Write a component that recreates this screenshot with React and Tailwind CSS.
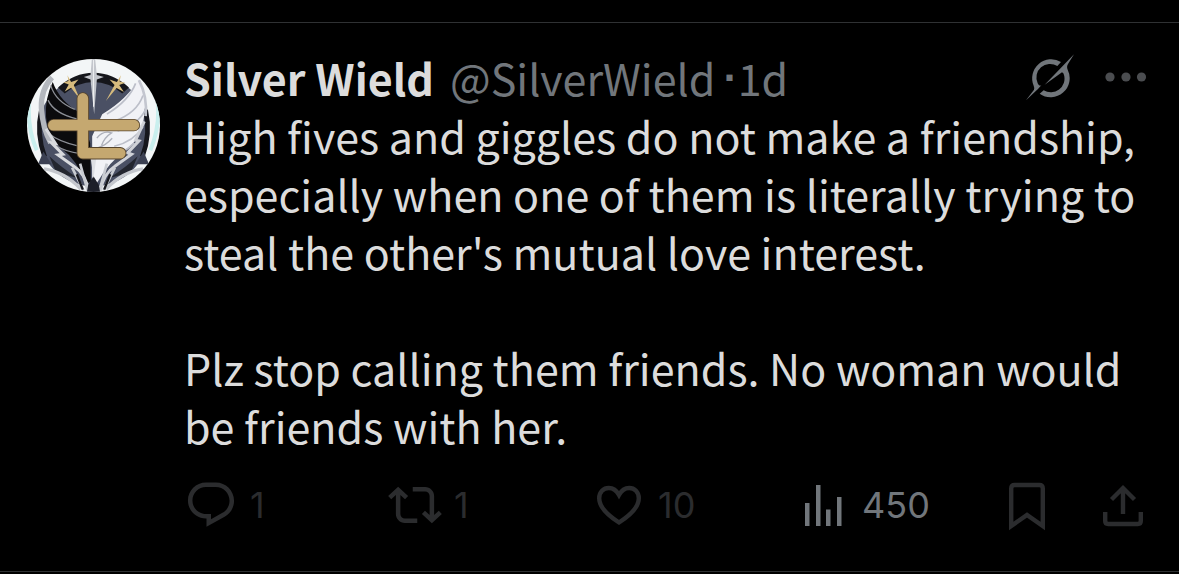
const Avatar = () => {
   return (
      <svg viewBox="37 27 398 398" className="size-[133px] shrink-0" role="img" aria-label="Silver Wield">
         <defs>
            <clipPath id="avatar-round">
               <circle cx="236" cy="226" r="199" />
            </clipPath>
         </defs>
         <g clipPath="url(#avatar-round)">
            <rect x="37" y="27" width="398" height="398" fill="#f3f6f7" />
            <path d="M44 150q-8 80 22 150M428 150q8 80-22 150" stroke="#c9efee" strokeWidth="12" fill="none" />
            {/* emblem disc */}
            <circle cx="236" cy="242" r="166" fill="#4a5064" />
            <path d="M130 112q48-44 106-44t106 44l-20 18q-40-34-86-34t-86 34z" fill="#15161b" />
            <path d="M80 180q-16 70 10 140M392 180q16 70-10 140" stroke="#16171d" strokeWidth="14" fill="none" />
            <path d="M70 342l16-38 24 38zM402 342l-16-38-24 38z" fill="#3b4052" />
            <path d="M104 318q36 34 86 66l-66-18zM368 318q-36 34-86 66l66-18z" fill="#23262f" />
            {/* dark wing */}
            <path d="M114 96q-24 50-20 104 4 60 46 94 46 34 74 106l14-6-2-116-30-90q-60-32-82-92z" fill="#0b0b0d" />
            <path d="M112 82q-34 36-32 92 4 62 28 104" stroke="#b4b8be" strokeWidth="16" fill="none" />
            <path d="M108 106q14 48 72 72M100 150q18 40 86 56M102 250q30 24 84 36M114 282q36 22 84 28" stroke="#8b8e95" strokeWidth="4" fill="none" />
            <path d="M94 236l28 44-12-2 34 34-14 2 50 36q32 20 42 74" stroke="#d8dade" strokeWidth="9" fill="none" />
            <path d="M88 356q60 8 110 60M384 356q-60 8-110 60" stroke="#c4c7cd" strokeWidth="10" fill="none" />
            {/* white wing */}
            <path d="M370 88q24 50 18 104-6 70-54 106-52 38-88 100l-14-10v-130l30-66q76-46 108-104z" fill="#f1f2f6" />
            <path d="M362 100q-20 52-86 92M384 136q-18 52-84 76M392 178q-22 46-84 64M384 230q-28 44-86 58M358 278q-34 34-72 40" stroke="#bcbfc9" strokeWidth="5" fill="none" />
            <path d="M372 90q26 50 20 108" stroke="#c3c6cf" strokeWidth="8" fill="none" />
            <path d="M388 214l-26 56 10 2-34 36 12 4-50 36q-34 22-44 74" stroke="#cfd1d7" strokeWidth="9" fill="none" />
            <path d="M246 264q18-24 44-16-22 14-30 38M250 292q22-6 42-28" stroke="#aeb1bb" strokeWidth="4" fill="none" />
            {/* tail feathers */}
            <path d="M172 352l34 68M196 340l22 80M300 352l-34 68M276 340l-22 80" stroke="#c9ccd2" strokeWidth="8" />
            <path d="M186 372l18 46M286 372l-18 46" stroke="#16171d" strokeWidth="7" />
            <path d="M220 404l16-26 16 26 4 22h-40z" fill="#1d1f29" />
            <path d="M228 326l8 58 8-58z" fill="#dddfe4" />
            {/* swords */}
            <path d="M231 27h10l5 48 21 6-21 7-8 104-11-104-20-7 20-6z" fill="#c3c6cc" />
            <path d="M236 30v140" stroke="#eceef0" strokeWidth="3" />
            <path d="M158 76l11 20 22-8-14 17 18 42-26-34-19 11 12-21-16-6 15-4zM318 76l-12 20-22-8 15 17-26 48 32-39 22 12-14-21 18-7-17-4z" fill="#d6bb7d" />
            {/* gold monogram */}
            <path d="M204 145v164h112M116 225h241" stroke="#57452c" strokeWidth="37" strokeLinecap="round" strokeLinejoin="round" fill="none" />
            <path d="M204 145v164h112M116 225h241" stroke="#c5a870" strokeWidth="32" strokeLinecap="round" strokeLinejoin="round" fill="none" />
         </g>
      </svg>
   )
}

const GrokIcon = () => (
   <svg viewBox="69 25 147 147" className="size-[49px]" fill="currentColor" aria-hidden="true">
      <path d="M72 167l24-32q2-5-1-12a57 57 0 0 1 82-71l-11 12a41 41 0 0 0-59 52q2 5 7 7l4-1-10 11z" />
      <path d="M216 29l-18 29q-5 8-1 17a57 57 0 0 1-84 72l12-10a41 41 0 0 0 61-46q-1-6-6-8l-52 37z" />
   </svg>
)

const MoreIcon = () => (
   <svg viewBox="0 0 48 48" className="size-12" fill="currentColor" aria-hidden="true">
      <circle cx="8" cy="24" r="4.6" />
      <circle cx="24" cy="24" r="4.6" />
      <circle cx="39.5" cy="24" r="4.6" />
   </svg>
)

const ReplyIcon = () => (
   <svg viewBox="0 0 24 24" className="size-[54px]" fill="currentColor" aria-hidden="true">
      <path d="M1.751 10c0-4.42 3.584-8 8.005-8h4.366c4.49 0 8.129 3.64 8.129 8.13 0 2.96-1.607 5.68-4.196 7.11l-8.054 4.46v-3.69h-.067c-4.49.1-8.183-3.51-8.183-8.01zm8.005-6c-3.317 0-6.005 2.69-6.005 6 0 3.37 2.77 6.08 6.138 6.01l.351-.01h1.761v2.3l5.087-2.81c1.951-1.08 3.163-3.13 3.163-5.36 0-3.39-2.744-6.13-6.129-6.13H9.756z" />
   </svg>
)

const RepostIcon = () => (
   <svg viewBox="0 0 24 24" className="size-[54px]" fill="currentColor" aria-hidden="true">
      <path d="M4.5 3.88l4.432 4.14-1.364 1.46L5.5 7.55V16c0 1.1.896 2 2 2H13v2H7.5c-2.209 0-4-1.79-4-4V7.55L1.432 9.48.068 8.02 4.5 3.88zM16.5 6H11V4h5.5c2.209 0 4 1.79 4 4v8.45l2.068-1.93 1.364 1.46-4.432 4.14-4.432-4.14 1.364-1.46 2.068 1.93V8c0-1.1-.896-2-2-2z" />
   </svg>
)

const LikeIcon = () => (
   <svg viewBox="0 0 54 54" className="size-[54px]" fill="none" stroke="currentColor" strokeWidth="4.4" aria-hidden="true">
      <path d="M27 44.5C14.5 36.5 7.2 28.5 7.2 20.2c0-6.2 4.3-10.2 9.6-10.2 4.4 0 7.8 2.6 10.2 7 2.4-4.4 5.8-7 10.2-7 5.3 0 9.6 4 9.6 10.2 0 8.3-7.3 16.3-19.8 24.3z" />
   </svg>
)

const ViewsIcon = () => (
   <svg viewBox="0 0 54 54" className="size-[54px]" fill="currentColor" aria-hidden="true">
      <path d="M9 25h4.5v23H9zM20 7h4.5v41H20zM30 31.5h4.5V48H30zM41 19h4.5v29H41z" />
   </svg>
)

const BookmarkIcon = () => (
   <svg viewBox="0 0 54 54" className="size-[54px]" fill="none" stroke="currentColor" strokeWidth="4.4" aria-hidden="true">
      <path d="M11.2 48V10.5q0-3.5 3.5-3.5h24.6q3.5 0 3.5 3.5V48L27 37z" />
   </svg>
)

const ShareIcon = () => (
   <svg viewBox="0 0 54 54" className="size-[54px]" fill="none" stroke="currentColor" strokeWidth="4.4" aria-hidden="true">
      <path d="M27 36V10M15.5 21.5L27 10l11.5 11.5M9.2 34v9q0 3 3 3h29.6q3 0 3-3v-9" />
   </svg>
)

const Action = ({ icon, label, count, color }) => {
   return (
      <div className="flex-1">
         <button className={`flex items-center gap-3 ${color}`} aria-label={label}>
            {icon}
            <span className="font-['Inter',sans-serif] text-4xl">{count}</span>
         </button>
      </div>
   )
}

const App = () => {
   return (
      <div className="min-h-screen bg-black pt-[22px] font-['Noto_Sans_CJK_SC',sans-serif] text-[43px] leading-[58px] text-[#dcdcdc]">
         <article className="flex gap-6 border-y border-[#2f3133] pt-[25px] pb-[39px] pl-[27px] pr-[29px]">
            <a href="#profile" className="mt-[11px] shrink-0 self-start">
               <Avatar />
            </a>
            <div className="min-w-0 flex-1">
               <header className="flex items-center">
                  <a href="#profile" className="flex gap-4">
                     <span className="font-bold">Silver Wield</span>
                     <span className="text-[#71767b]">@SilverWield</span>
                  </a>
                  <span className="ml-2 font-['Liberation_Sans',sans-serif] font-bold text-[#71767b]">·</span>
                  <a href="#post" className="text-[#71767b]">1d</a>
                  <div className="ml-auto flex items-center gap-7">
                     <button aria-label="Explain this post" className="text-[#71767b]"><GrokIcon /></button>
                     <button aria-label="More" className="text-[#4b4d50]"><MoreIcon /></button>
                  </div>
               </header>
               <p>
                  High fives and giggles do not make a friendship, especially when one of them is literally trying to steal the other's mutual love interest.
               </p>
               <p className="mt-[58px]">
                  Plz stop calling them friends. No woman would be friends with her.
               </p>
               <footer className="mt-6 flex items-center text-[#2b2c2e]">
                  <Action icon={<ReplyIcon />} label="Reply" count="1" color="text-[#2b2c2e]" />
                  <Action icon={<RepostIcon />} label="Repost" count="1" color="text-[#2b2c2e]" />
                  <Action icon={<LikeIcon />} label="Like" count="10" color="text-[#2b2c2e]" />
                  <Action icon={<ViewsIcon />} label="Views" count="450" color="text-[#71767b]" />
                  <div className="flex gap-[42px]">
                     <button aria-label="Bookmark"><BookmarkIcon /></button>
                     <button aria-label="Share"><ShareIcon /></button>
                  </div>
               </footer>
            </div>
         </article>
      </div>
   )
}

export default App
